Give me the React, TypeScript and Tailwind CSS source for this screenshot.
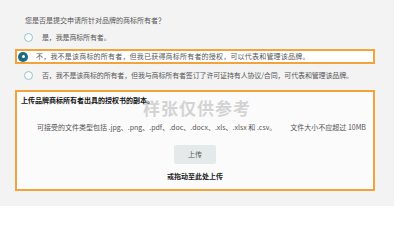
import React from 'react'

const font = { fontFamily: '"Noto Sans CJK SC", "Noto Sans", sans-serif' }

interface RadioRowProps {
  label: string
  checked?: boolean
}

const RadioRow: React.FC<RadioRowProps> = ({ label, checked }) => {
  return (
    <div
      className={
        checked
          ? 'ml-[15px] mr-[19px] flex h-[15px] items-center border-2 border-[#f2a33a] bg-white pl-[1px]'
          : 'ml-[15px] mr-[19px] flex h-[15px] items-center pl-[9px]'
      }
    >
      {checked ? (
        <span className="flex h-[10px] w-[10px] items-center justify-center rounded-full bg-[#1c6b80]">
          <span className="h-[3px] w-[3px] rounded-full bg-white" />
        </span>
      ) : (
        <span className="h-[9px] w-[9px] rounded-full border border-[#8fc4cc] bg-white" />
      )}
      <span
        className={
          checked
            ? 'ml-[8px] text-[7px] leading-none tracking-[0.2px] text-[#555]'
            : 'ml-[9px] text-[7px] leading-none tracking-[-0.15px] text-[#555]'
        }
      >
        {label}
      </span>
    </div>
  )
}

export default function App() {
  return (
    <div className="relative h-[206px] w-[394px] overflow-hidden bg-[#f3f3f3] pt-[16px]" style={font}>
      {/* Question */}
      <div className="px-[25px] text-[7px] leading-[9px] text-[#555]">您是否是提交申请所针对品牌的商标所有者？</div>

      {/* Options */}
      <div className="mt-[5px] flex flex-col gap-[4px]">
        <RadioRow label="是，我是商标所有者。" />
        <RadioRow checked label="不，我不是该商标的所有者，但我已获得商标所有者的授权，可以代表和管理该品牌。" />
        <RadioRow label="否，我不是该商标的所有者，但我与商标所有者签订了许可证持有人协议/合同，可代表和管理该品牌。" />
      </div>

      {/* Upload box */}
      <div className="ml-[15px] mr-[19px] mt-[7px] h-[101px] border-2 border-[#f2a33a] bg-[#fbfbfc] px-[4px] pt-[4px]">
        <div className="text-[7px] font-bold leading-[9px] text-[#111]">上传品牌商标所有者出具的授权书的副本。</div>
        <div className="mt-[18px] flex pl-[16px] text-[7px] leading-[9px] text-[#555]">
          <span>可接受的文件类型包括 .jpg、.png、.pdf、.doc、.docx、.xls、.xlsx 和 .csv。</span>
          <span className="ml-[14px]">文件大小不应超过 10MB</span>
        </div>
        <div className="mt-[13px] flex justify-center">
          <button className="h-[19px] w-[42px] rounded-[2px] bg-[#e4eaea] text-[7px] leading-none text-[#555]">上传</button>
        </div>
        <div className="mt-[8px] text-center text-[7px] font-bold leading-[9px] text-[#222]">或拖动至此处上传</div>
      </div>

      {/* Watermark */}
      <div className="pointer-events-none absolute left-[143px] top-[95px] text-[17px] font-bold tracking-[1px] text-[#9a9a9a] opacity-40">
        样张仅供参考
      </div>
    </div>
  )
}
